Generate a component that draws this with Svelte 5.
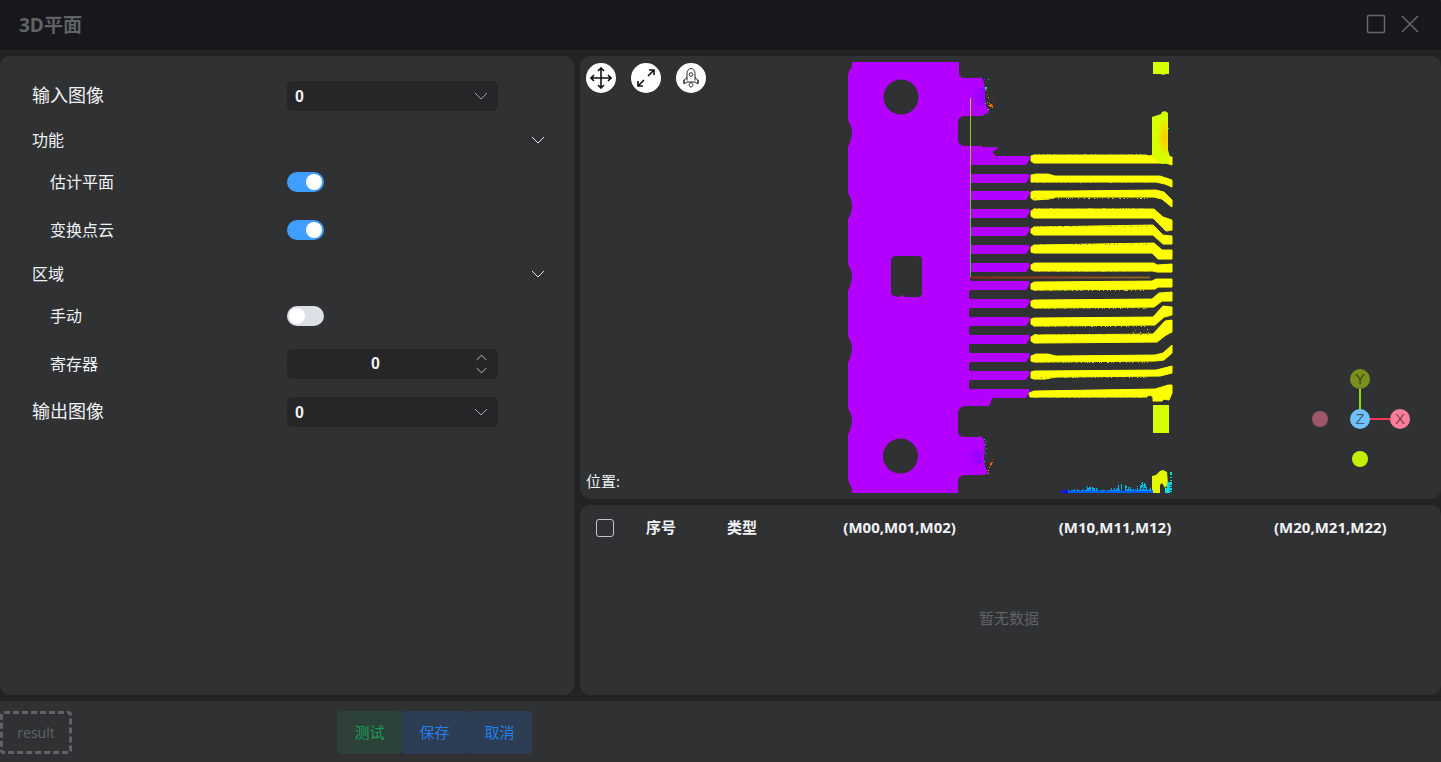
<script>
  let inputImage = $state('0');
  let outputImage = $state('0');
  let register = $state('0');
  let estimate = $state(true);
  let transform = $state(true);
  let manual = $state(false);
  let functionsOpen = $state(true);
  let regionOpen = $state(true);

  const columns = ['序号', '类型', '(M00,M01,M02)', '(M10,M11,M12)', '(M20,M21,M22)'];

  // Plate outline with the contact fingers on its right side
  const fingers = [156, 174, 191, 209, 227, 245, 263, 281, 299, 317, 335, 353, 371, 389];
  const notches = [133, 206, 277, 349, 421];
  let plate = 'M852 62H959V72Q959 78 965 78H979L980 77L983 79L985 88L985 99L986 106L989 111L987 114L984 114L983 116H965Q958 116 958 123V139Q958 146 965 146H980L981 145L982 147H998L996 150L993 151L993 153L996 156';
  fingers.forEach((y, i) => {
    plate += `H1029L1030 ${y + 2}L1028 ${y + 6}L1026 ${y + 9}`;
    if (i < fingers.length - 1) {
      const next = fingers[i + 1];
      const x = i < 7 ? 970 : 969;
      plate += `H${x + 2}Q${x} ${y + 9} ${x} ${y + 11}V${next - 2}Q${x} ${next} ${x + 2} ${next}`;
    }
  });
  plate += 'H994Q991 398 991 402L989 406H965Q958 407 958 414V431Q958 437 965 437H979L980 436L984 439L985 445L984 460L985 466L988 473L984 475H965Q958 475 958 482V493H852V489L848 480';
  [...notches].reverse().forEach((y) => {
    plate += `V${y + 13}Q856 ${y} 848 ${y - 13}`;
  });
  plate += 'V74L852 66Z';

  const traces = [
    'M1031 156L1034 155H1146L1149 156L1153 155L1172 157V165L1166 163L1034 163L1031 161Z',
    'M1031 175L1036 174H1048L1055 176H1152L1160 176L1172 180V187L1165 184L1156 182H1034L1031 182Z',
    'M1031 192L1034 191L1065 191L1156 190L1164 192L1172 200V207L1168 204L1162 199L1154 197H1056L1049 199L1034 200L1031 198Z',
    'M1031 211L1034 209H1154L1163 217L1172 220V230L1166 231L1153 218H1034L1031 216Z',
    'M1031 229L1034 227L1153 225L1163 235L1172 236V244H1163L1153 235H1034L1031 233Z',
    'M1031 247L1034 245L1154 243L1162 250H1172V259H1158L1152 253H1034L1031 252Z',
    'M1031 265L1034 263L1154 263L1157 265L1172 264V272H1157L1153 271H1034L1031 269Z',
    'M1031 284L1034 282L1152 281L1156 279H1172V287H1158L1155 289L1034 290L1031 289Z',
    'M1031 301L1034 300L1152 299L1159 293L1172 292V301H1162L1154 307L1034 308L1031 306Z',
    'M1031 319L1034 318L1153 317L1163 306L1172 307V315L1164 317L1155 325L1034 326L1031 324Z',
    'M1031 337L1034 335L1153 334L1165 321L1172 320V332L1166 335L1157 342L1034 343L1031 341Z',
    'M1031 356L1036 354H1048L1056 356L1155 355L1163 353L1172 345V353L1164 360L1155 361L1034 362L1031 361Z',
    'M1031 372L1034 371L1156 370L1172 366V373L1160 376L1056 377L1045 379H1034L1031 378Z',
    'M1029 393L1034 391L1155 389L1165 386L1168 385L1172 385V393L1169 400L1164 399L1162 401L1153 401V397L1150 395L1145 397H1030Z'
  ];

  // Scattered points, from a fixed seed so that the cloud is stable
  let seed = 11;
  const random = () => {
    seed = (seed * 16807) % 2147483647;
    return seed / 2147483647;
  };
  const points = [];
  for (let x = 1061; x < 1153; x++) {
    const hump = 3 * Math.exp(-(((x - 1089) / 7) ** 2)) + 9 * Math.exp(-(((x - 1124) / 6) ** 2)) + 8 * Math.exp(-(((x - 1142) / 6) ** 2));
    const top = 2 + Math.floor(random() * (3 + hump));
    for (let h = 0; h < top; h++) {
      if (h > 2 && random() < 0.25) continue;
      points.push({ x, y: 492 - h, c: x < 1068 ? '#1010ff' : h < 2 ? '#0060ff' : h < 4 ? '#0090ff' : '#00c0e6' });
    }
  }
  for (let y = 472; y < 493; y++) {
    if (random() < 0.75) points.push({ x: 1170, y, c: '#00e0d0' }, { x: 1171, y, c: '#00e0d0' });
    if (y > 481) points.push({ x: 1168, y, c: '#00d8f0' }, { x: 1169, y, c: '#00c8ff' }, { x: 1167, y, c: '#20e8c0' });
    if (y > 487) points.push({ x: 1165, y, c: '#20e8c0' }, { x: 1166, y, c: '#00d8f0' });
  }
  const speckle = [
    [984, 79, '#0050ff'], [988, 79, '#c08000'], [985, 87, '#00ff80'], [986, 88, '#00ff80'], [985, 88, '#00ff80'], [986, 87, '#00ff80'], [985, 89, '#0080ff'], [986, 90, '#e08000'],
    [987, 94, '#808000'], [988, 97, '#e09000'], [985, 103, '#00e080'], [987, 102, '#c0a000'], [988, 105, '#d06000'], [989, 103, '#ff6000'],
    [990, 104, '#ff6000'], [991, 104, '#ff6000'], [992, 105, '#ff5000'], [991, 106, '#ff6000'], [990, 106, '#ff8000'], [989, 105, '#ff9000'],
    [990, 105, '#ff6000'], [991, 105, '#ff6000'], [992, 106, '#ff5000'], [992, 107, '#ff7000'],
    [992, 102, '#d02000'], [993, 96, '#901000'], [988, 109, '#e0c000'], [989, 99, '#a02000'],
    [984, 439, '#00b0ff'], [986, 441, '#00c090'], [985, 444, '#00d0a0'], [986, 448, '#60a000'], [985, 453, '#00a0ff'], [984, 461, '#00d0e0'],
    [986, 457, '#206080'], [993, 459, '#d03000'], [992, 462, '#ff5000'], [991, 463, '#ff6000'], [991, 464, '#ff5000'], [990, 465, '#ff7000'],
    [990, 463, '#ff5000'], [990, 464, '#ff6000'], [991, 462, '#ff5000'],
    [989, 467, '#ff9000'], [988, 470, '#ffa000'], [988, 473, '#ffb000'], [992, 460, '#b02000'],
    [1133, 332, '#e0e000'], [1135, 330, '#909000'], [1140, 332, '#e0e000'], [1147, 329, '#d0d000'], [1148, 332, '#b0b000'], [1168, 128, '#00ff60'], [1164, 163, '#20ff40']
  ];
  speckle.forEach(([x, y, c]) => points.push({ x, y, c }));
  // Rough edges left by the scan along each trace
  const rows = [154, 182, 198, 208, 226, 244, 271, 290, 308, 326, 334, 362, 377, 397];
  rows.forEach((y) => {
    for (let x = 1034; x < 1148; x += 1 + Math.floor(random() * 6)) points.push({ x, y, c: random() < 0.6 ? '#d8d808' : '#98981a' });
  });
</script>

{#snippet chevron(size)}
  <svg class="chevron" width={size} height={size} viewBox="0 0 14 14" aria-hidden="true"><path d="M1 4l6 6 6-6" /></svg>
{/snippet}

<div class="window">
  <header class="titlebar">
    <h1>3D平面</h1>
    <div class="window-tools">
      <button aria-label="最大化"><svg width="20" height="20" viewBox="0 0 20 20"><rect x="1.500" y="1.500" width="17" height="17" rx="1" /></svg></button>
      <button aria-label="关闭"><svg width="20" height="20" viewBox="0 0 20 20"><path d="M2 2l16 16M18 2L2 18" /></svg></button>
    </div>
  </header>

  <main>
    <form class="panel settings">
      <div class="row main-row">
        <label for="input-image">输入图像</label>
        <div class="field">
          <select id="input-image" bind:value={inputImage}><option>0</option></select>
          {@render chevron(14)}
        </div>
      </div>

      <button type="button" class="section" aria-expanded={functionsOpen} onclick={() => (functionsOpen = !functionsOpen)}>
        功能 {@render chevron(14)}
      </button>
      {#if functionsOpen}
        <div class="row sub"><label for="estimate">估计平面</label><input id="estimate" class="switch" type="checkbox" bind:checked={estimate} /></div>
        <div class="row sub"><label for="transform">变换点云</label><input id="transform" class="switch" type="checkbox" bind:checked={transform} /></div>
      {/if}

      <button type="button" class="section" aria-expanded={regionOpen} onclick={() => (regionOpen = !regionOpen)}>
        区域 {@render chevron(14)}
      </button>
      {#if regionOpen}
        <div class="row sub"><label for="manual">手动</label><input id="manual" class="switch" type="checkbox" bind:checked={manual} /></div>
        <div class="row sub">
          <label for="register">寄存器</label>
          <div class="field number">
            <input id="register" type="text" inputmode="numeric" bind:value={register} />
            <div class="steps">
              <button type="button" class="up" aria-label="增加" onclick={() => (register = String(+register + 1))}>{@render chevron(11)}</button>
              <button type="button" aria-label="减少" onclick={() => (register = String(+register - 1))}>{@render chevron(11)}</button>
            </div>
          </div>
        </div>
      {/if}

      <div class="row main-row">
        <label for="output-image">输出图像</label>
        <div class="field">
          <select id="output-image" bind:value={outputImage}><option>0</option></select>
          {@render chevron(14)}
        </div>
      </div>
    </form>

    <div class="side">
      <section class="panel view">
        <svg class="cloud" viewBox="586 62 849 431" aria-hidden="true">
          <defs>
            <linearGradient id="axis-y" x1="0" y1="0" x2="0" y2="1"><stop offset="0" stop-color="#b4c800" /><stop offset="1" stop-color="#22e000" /></linearGradient>
            <linearGradient id="axis-x"><stop offset="0" stop-color="#9c2410" /><stop offset="1" stop-color="#966c1c" /></linearGradient>
            <linearGradient id="tab"><stop offset="0" stop-color="#b400ff" /><stop offset="0.800" stop-color="#7800ff" /><stop offset="1" stop-color="#b400ff" /></linearGradient>
            <radialGradient id="post" cx="0.700" cy="0.500" r="0.400"><stop offset="0" stop-color="#ffc800" /><stop offset="1" stop-color="#d8ff00" /></radialGradient>
          </defs>
          <path fill="#b400ff" d={plate} />
          <rect x="971" y="88" width="14" height="18" fill="url(#tab)" opacity="0.500" />
          <rect x="966" y="450" width="18" height="14" fill="url(#tab)" opacity="0.500" />
          <g fill="#303133">
            <circle cx="901" cy="97" r="17.500" />
            <circle cx="900.500" cy="456" r="17.500" />
            <path d="M896 256H918Q922 256 922 260V294L920 297H905L902 295L899 297L894 296Q891 295 891 292V260Q892 256 896 256Z" />
          </g>
          <g fill="#ffff00" stroke="#ffff00" stroke-width="1">{#each traces as d}<path {d} />{/each}</g>
          <path fill="#d8ff00" d="M1153 62H1169V74H1165L1164 75L1160 74H1153ZM1153 405H1169V433H1153Z" />
          <path fill="url(#post)" d="M1152 117L1158 115L1161 114L1162 112L1165 111L1168 113L1168 150L1170 157L1168 164H1162L1152 157Z" />
          <path fill="#e4f800" d="M1152 476L1156 475L1160 471L1163 470L1167 472L1168 484L1165 488L1162 483L1160 485V493H1152Z" />
          <g shape-rendering="crispEdges">
            {#each points as p}<rect x={p.x} y={p.y} width="1" height="1" fill={p.c} />{/each}
            <rect x="970" y="276" width="180" height="3" fill="url(#axis-x)" opacity="0.400" />
            <rect x="970" y="277" width="180" height="1" fill="url(#axis-x)" />
            <rect x="970" y="98" width="1" height="179" fill="url(#axis-y)" />
          </g>
        </svg>

        <div class="view-tools">
          <button aria-label="移动">
            <svg width="22" height="22" viewBox="0 0 22 22" stroke-width="1.600"><path d="M11 2v18M2 11h18M8 4l3-3 3 3M8 18l3 3 3-3M4 8l-3 3 3 3M18 8l3 3-3 3" /></svg>
          </button>
          <button aria-label="全屏">
            <svg width="22" height="22" viewBox="0 0 22 22" stroke-width="1.600"><path d="M13 9l6-6M14 3h5v5M9 13l-6 6M3 14v5h5" /></svg>
          </button>
          <button aria-label="复位">
            <svg width="22" height="22" viewBox="0 0 22 22" stroke-width="0.900"><path d="M7 13.500V6.500C7 3.500 9 1.500 11 1.500S15 3.500 15 6.500V13.500M7 10.500l-3 2.500v4l3-2h8l3 2v-4l-3-2.500M4 13v3M18 13v3M11 15.500c-3 1.500-2 3.500 0 5 2-1.500 3-3.500 0-5z" /><circle cx="11" cy="7.500" r="1.800" /></svg>
          </button>
        </div>

        <div class="position">位置:</div>

        <svg class="gizmo" width="100" height="100" viewBox="0 0 100 100">
          <path d="M49 50V10" stroke="#8cdc00" stroke-width="2" />
          <path d="M49 51H89" stroke="#ff3653" stroke-width="2" />
          <circle cx="9" cy="51" r="8" fill="#9d5768" />
          <circle cx="49" cy="91" r="8" fill="#c4f000" />
          <circle cx="49" cy="11" r="10" fill="#7a901c" />
          <circle cx="89" cy="51" r="10" fill="#ff7f9a" />
          <circle cx="49" cy="51" r="10" fill="#70c1ff" />
          <text x="49" y="16" fill="#3d480e">Y</text>
          <text x="89" y="56" fill="#80404d">X</text>
          <text x="49" y="56" fill="#38607f">Z</text>
        </svg>
      </section>

      <section class="panel results">
        <table>
          <thead>
            <tr>
              <th class="pick"><input type="checkbox" aria-label="全选" /></th>
              {#each columns as column, i}<th class={['index', 'kind'][i]}>{column}</th>{/each}
            </tr>
          </thead>
          <tbody>
            <tr><td colspan="6">暂无数据</td></tr>
          </tbody>
        </table>
      </section>
    </div>
  </main>

  <footer>
    <output>result</output>
    <div class="actions">
      <button class="test">测试</button>
      <button>保存</button>
      <button>取消</button>
    </div>
  </footer>
</div>

<style>
  :global(body) { background: #232323; }
  * { box-sizing: border-box; }
  svg { display: block; flex: none; fill: none; }
  button, input, select { margin: 0; padding: 0; border: 0; background: none; color: inherit; font: inherit; }
  button { cursor: pointer; }

  .window {
    display: flex;
    flex-direction: column;
    gap: 6px;
    min-height: 100vh;
    background: #232323;
    color: #f0f2f5;
    font-family: "Open Sans", "Noto Sans CJK SC", sans-serif;
    font-size: 15px;
    line-height: 20px;
  }
  .titlebar {
    display: flex;
    align-items: center;
    justify-content: space-between;
    height: 50px;
    padding: 0 21px 2px 19px;
    border-radius: 4px 4px 0 0;
    background: #18171c;
    color: #606266;
  }
  h1 { margin: 0; padding-top: 2px; font-size: 19px; font-weight: 700; line-height: 24px; }
  .window-tools { display: flex; gap: 14px; }
  .window-tools svg { stroke: #68696d; stroke-width: 1.5; }

  main { display: grid; flex: 1; grid-template-columns: minmax(0, 4fr) minmax(0, 6fr); gap: 6px; }
  .panel { border-radius: 10px; background: #303133; }
  .settings { padding: 16px 26px 16px 32px; }
  .side { display: grid; grid-template-rows: minmax(0, 7fr) minmax(0, 3fr); gap: 6px; }

  .row { display: grid; grid-template-columns: 255fr 261fr; align-items: center; height: 48px; font-size: 16px; }
  .main-row { font-size: 18px; }
  .main-row label { padding-bottom: 2px; }
  .sub label { padding-left: 18px; }
  .section {
    display: flex;
    align-items: center;
    justify-content: space-between;
    width: 100%;
    height: 36px;
    margin-top: 2px;
    padding-right: 3px;
    font-size: 16px;
    text-align: left;
  }
  .chevron { stroke: #e5e7eb; stroke-width: 1; }

  .field {
    display: grid;
    grid-template-columns: 1fr 34px;
    align-items: center;
    width: 211px;
    height: 30px;
    border-radius: 5px;
    background: #262628;
    font: 700 16px "Liberation Sans", Arial, sans-serif;
  }
  .field select { grid-column: 1 / 3; grid-row: 1; width: 100%; height: 30px; padding-left: 8px; appearance: none; }
  .field > .chevron { grid-column: 2; grid-row: 1; justify-self: center; pointer-events: none; stroke: #a3a6ad; }
  .number input { width: 100%; height: 30px; text-align: center; min-width: 0; }
  .number .steps { display: flex; flex-direction: column; align-items: center; gap: 2px; }
  .up { transform: rotate(180deg); }

  .switch { width: 37px; height: 20px; border-radius: 10px; background: #dcdfe6; appearance: none; }
  .switch::before { content: ""; display: block; width: 16px; height: 16px; margin: 2px; border-radius: 50%; background: #fff; }
  .switch:checked { background: #409eff; }
  .switch:checked::before { margin-left: 19px; }

  .view { position: relative; padding: 6px; overflow: hidden; }
  .cloud { width: 100%; height: 100%; }
  .view-tools { position: absolute; top: 7px; left: 6px; display: flex; gap: 15px; }
  .view-tools button { display: grid; place-items: center; width: 30px; height: 30px; border-radius: 50%; background: #fff; }
  .view-tools svg { stroke: #111; }
  .position { position: absolute; bottom: 8px; left: 6px; }
  .gizmo { position: absolute; right: 30px; bottom: 31px; }
  .gizmo text { font-family: "Liberation Sans", Arial, sans-serif; font-size: 15px; text-anchor: middle; }

  .results { padding-right: 3px; }
  table { width: 100%; border-collapse: collapse; table-layout: fixed; text-align: center; }
  th { height: 45px; padding: 0 0 2px; font-weight: 700; font-size: 15px; }
  td { height: 137px; padding: 0 0 2px; color: #606266; }
  .pick { width: 50px; }
  .index { width: 62px; }
  .kind { width: 100px; }
  .pick input { display: block; width: 18px; height: 18px; margin: 2px auto 0; border: 1px solid #c0c4cc; border-radius: 3px; appearance: none; }

  footer { display: flex; gap: 265px; height: 61px; padding: 10px 0 8px; background: #303133; color: #606266; }
  output { display: grid; place-items: center; width: 72px; border: 3px dashed #606266; border-radius: 4px; font-size: 14px; }
  .actions { display: flex; }
  .actions button { width: 65px; padding-bottom: 2px; border-radius: 4px; background: #2c3d54; color: #2580eb; }
  .actions .test { background: #2c4238; color: #1b9e5a; }
</style>
